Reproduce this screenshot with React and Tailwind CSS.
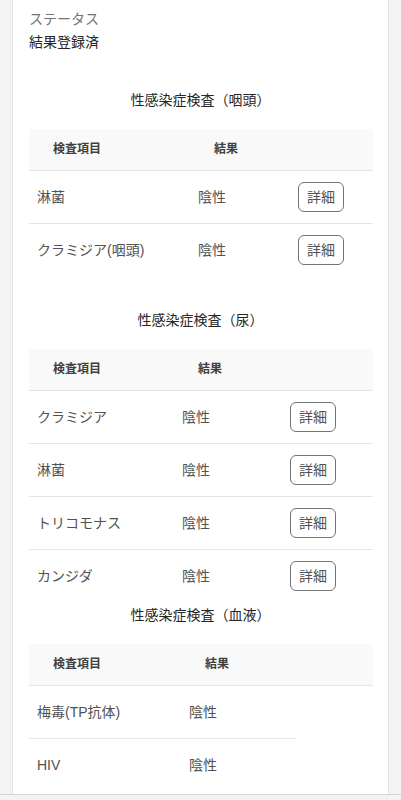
const sections = [
  {
    title: '性感染症検査（咽頭）',
    cols: ['w-[161px]', 'w-[100px]', 'w-[83px]'],
    rows: [
      { name: '淋菌', result: '陰性', detail: true },
      { name: 'クラミジア(咽頭)', result: '陰性', detail: true },
    ],
    gap: 'mb-[34px]',
  },
  {
    title: '性感染症検査（尿）',
    cols: ['w-[145px]', 'w-[108px]', 'w-[91px]'],
    rows: [
      { name: 'クラミジア', result: '陰性', detail: true },
      { name: '淋菌', result: '陰性', detail: true },
      { name: 'トリコモナス', result: '陰性', detail: true },
      { name: 'カンジダ', result: '陰性', detail: true },
    ],
    gap: '',
  },
  {
    title: '性感染症検査（血液）',
    cols: ['w-[152px]', 'w-[115px]', 'w-[77px]'],
    rows: [
      { name: '梅毒(TP抗体)', result: '陰性', detail: false },
      { name: 'HIV', result: '陰性', detail: false },
    ],
    gap: 'pt-[3px]',
  },
];

function ResultTable({ section }) {
  const last = section.rows.length - 1;
  return (
    <div className={section.gap}>
      <h3 className="text-center text-sm leading-5 text-neutral-800">{section.title}</h3>
      <table className="mt-[19px] w-full table-fixed border-collapse">
        <colgroup>
          {section.cols.map((c) => (
            <col key={c} className={c} />
          ))}
        </colgroup>
        <thead>
          <tr className="h-[41px] bg-[#f9f9fa]">
            <th className="border-b border-neutral-200 px-6 text-left text-xs font-semibold text-neutral-700">検査項目</th>
            <th className="border-b border-neutral-200 px-6 text-left text-xs font-semibold text-neutral-700">結果</th>
            <th className="border-b border-neutral-200"></th>
          </tr>
        </thead>
        <tbody>
          {section.rows.map((row, i) => {
            const line = i < last ? 'border-b border-neutral-200' : '';
            return (
              <tr key={row.name} className="h-[53px]">
                <td className={`px-2 text-sm text-neutral-600 ${line}`}>{row.name}</td>
                <td className={`px-2 text-sm text-neutral-600 ${line}`}>{row.result}</td>
                {row.detail && (
                  <td className={`px-2 ${line}`}>
                    <button className="rounded-md border border-neutral-500 px-2 py-1 text-sm leading-5 text-neutral-600">
                      詳細
                    </button>
                  </td>
                )}
              </tr>
            );
          })}
        </tbody>
      </table>
    </div>
  );
}

export default function App() {
  return (
    <div className="min-h-[800px] bg-[#f3f3f5] font-['Liberation_Sans','Noto_Sans_CJK_JP',sans-serif]">
      <div className="mx-3 border-x border-neutral-200 bg-white px-4 pt-[9px] pb-[3px]">
        <p className="text-sm leading-5 text-neutral-500">ステータス</p>
        <p className="mt-[3px] text-sm leading-5 text-neutral-800">結果登録済</p>
        <div className="mt-[38px]">
          {sections.map((s) => (
            <ResultTable key={s.title} section={s} />
          ))}
        </div>
      </div>
      <div className="h-[20px] border-t border-neutral-300 bg-[#f3f3f5]"></div>
    </div>
  );
}
